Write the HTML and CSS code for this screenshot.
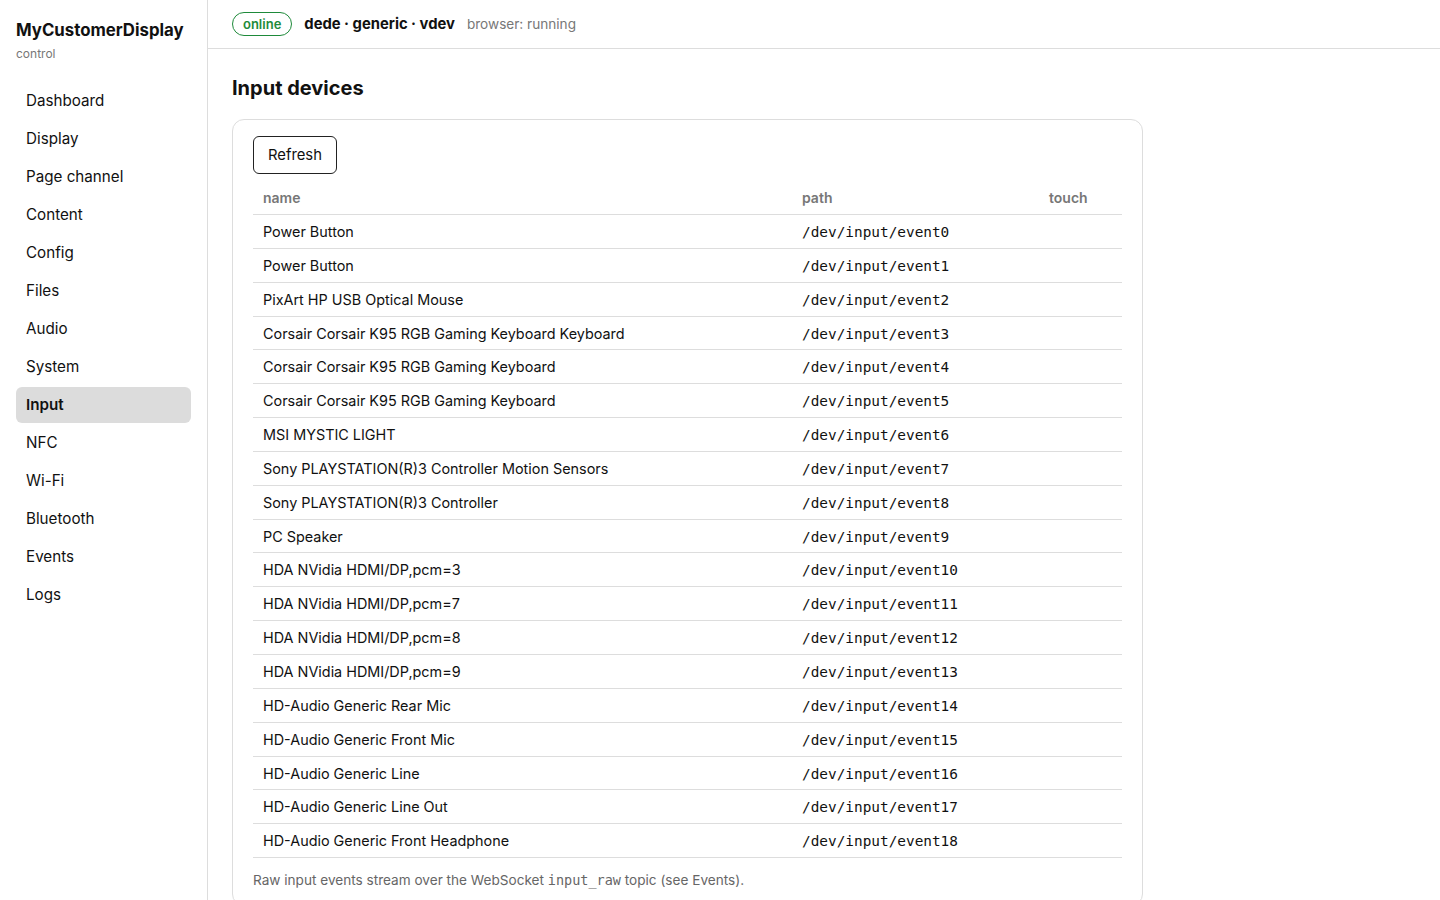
FILE: index.html
```html
<!DOCTYPE html>
<html lang="en">
<head>
    <meta charset="UTF-8">
    <meta name="viewport" content="width=device-width, initial-scale=1.0">
    <title>MyCustomerDisplay - Input</title>
    <link rel="stylesheet" href="styles.css">
</head>
<body>
    <div class="layout">
        <aside class="sidebar">
            <div class="brand">
                <div class="brand-name">MyCustomerDisplay</div>
                <div class="brand-sub">control</div>
            </div>
            <nav class="nav">
                <a href="#">Dashboard</a>
                <a href="#">Display</a>
                <a href="#">Page channel</a>
                <a href="#">Content</a>
                <a href="#">Config</a>
                <a href="#">Files</a>
                <a href="#">Audio</a>
                <a href="#">System</a>
                <a href="#" class="active">Input</a>
                <a href="#">NFC</a>
                <a href="#">Wi-Fi</a>
                <a href="#">Bluetooth</a>
                <a href="#">Events</a>
                <a href="#">Logs</a>
            </nav>
        </aside>

        <div class="main">
            <header class="topbar">
                <span class="badge">online</span>
                <span class="host">dede · generic · vdev</span>
                <span class="status">browser: running</span>
            </header>

            <section class="content">
                <h1>Input devices</h1>
                <div class="card">
                    <button class="btn">Refresh</button>
                    <table class="devices">
                        <thead>
                            <tr>
                                <th class="col-name">name</th>
                                <th class="col-path">path</th>
                                <th class="col-touch">touch</th>
                            </tr>
                        </thead>
                        <tbody>
                            <tr><td>Power Button</td><td class="mono">/dev/input/event0</td><td></td></tr>
                            <tr><td>Power Button</td><td class="mono">/dev/input/event1</td><td></td></tr>
                            <tr><td>PixArt HP USB Optical Mouse</td><td class="mono">/dev/input/event2</td><td></td></tr>
                            <tr><td>Corsair Corsair K95 RGB Gaming Keyboard Keyboard</td><td class="mono">/dev/input/event3</td><td></td></tr>
                            <tr><td>Corsair Corsair K95 RGB Gaming Keyboard</td><td class="mono">/dev/input/event4</td><td></td></tr>
                            <tr><td>Corsair Corsair K95 RGB Gaming Keyboard</td><td class="mono">/dev/input/event5</td><td></td></tr>
                            <tr><td>MSI MYSTIC LIGHT</td><td class="mono">/dev/input/event6</td><td></td></tr>
                            <tr><td>Sony PLAYSTATION(R)3 Controller Motion Sensors</td><td class="mono">/dev/input/event7</td><td></td></tr>
                            <tr><td>Sony PLAYSTATION(R)3 Controller</td><td class="mono">/dev/input/event8</td><td></td></tr>
                            <tr><td>PC Speaker</td><td class="mono">/dev/input/event9</td><td></td></tr>
                            <tr><td>HDA NVidia HDMI/DP,pcm=3</td><td class="mono">/dev/input/event10</td><td></td></tr>
                            <tr><td>HDA NVidia HDMI/DP,pcm=7</td><td class="mono">/dev/input/event11</td><td></td></tr>
                            <tr><td>HDA NVidia HDMI/DP,pcm=8</td><td class="mono">/dev/input/event12</td><td></td></tr>
                            <tr><td>HDA NVidia HDMI/DP,pcm=9</td><td class="mono">/dev/input/event13</td><td></td></tr>
                            <tr><td>HD-Audio Generic Rear Mic</td><td class="mono">/dev/input/event14</td><td></td></tr>
                            <tr><td>HD-Audio Generic Front Mic</td><td class="mono">/dev/input/event15</td><td></td></tr>
                            <tr><td>HD-Audio Generic Line</td><td class="mono">/dev/input/event16</td><td></td></tr>
                            <tr><td>HD-Audio Generic Line Out</td><td class="mono">/dev/input/event17</td><td></td></tr>
                            <tr><td>HD-Audio Generic Front Headphone</td><td class="mono">/dev/input/event18</td><td></td></tr>
                        </tbody>
                    </table>
                    <p class="note">Raw input events stream over the WebSocket <code>input_raw</code> topic (see Events).</p>
                </div>
            </section>
        </div>
    </div>
</body>
</html>
```

FILE: styles.css
```css
body {
    margin: 0;
    font-family: Inter, "Noto Sans", Arial, sans-serif;
    color: #111;
    background-color: #fff;
}

.layout {
    display: flex;
    min-height: 100vh;
}

.sidebar {
    width: 175px;
    flex-shrink: 0;
    padding: 20px 16px;
    border-right: 1px solid #ddd;
}

.brand-name {
    font-size: 16.8px;
    font-weight: 700;
    line-height: 20px;
}

.brand-sub {
    margin-top: 7px;
    font-size: 12px;
    line-height: 14px;
    color: #777;
}

.nav {
    display: flex;
    flex-direction: column;
    gap: 2px;
    margin-top: 22px;
}

.nav a {
    display: block;
    height: 36px;
    line-height: 36px;
    padding: 0 10px;
    border-radius: 6px;
    font-size: 15.2px;
    color: #111;
    text-decoration: none;
}

.nav a.active {
    background-color: #dcdcdc;
    font-weight: 600;
}

.main {
    flex: 1;
    min-width: 0;
}

.topbar {
    display: flex;
    align-items: center;
    height: 48px;
    padding: 0 24px;
    border-bottom: 1px solid #ddd;
}

.badge {
    height: 22px;
    line-height: 22px;
    padding: 0 10px;
    border: 1px solid #1e8a3a;
    border-radius: 12px;
    color: #1e8a3a;
    font-size: 13px;
    font-weight: 600;
}

.host {
    margin-left: 12px;
    font-size: 14.8px;
    font-weight: 700;
}

.status {
    margin-left: 12px;
    font-size: 13.6px;
    color: #777;
}

.content {
    padding: 27px 24px 24px;
}

h1 {
    margin: 0 0 19px;
    font-size: 20px;
    line-height: 24px;
    font-weight: 700;
}

.card {
    max-width: 869px;
    padding: 16px 20px;
    border: 1px solid #ddd;
    border-radius: 12px;
}

.btn {
    display: block;
    padding: 0 14px;
    height: 38px;
    font-family: inherit;
    font-size: 14.8px;
    color: #111;
    background-color: #fff;
    border: 1px solid #222;
    border-radius: 6px;
    cursor: pointer;
}

.devices {
    width: 100%;
    margin-top: 10px;
    border-collapse: collapse;
    font-size: 14.4px;
}

.devices th {
    text-align: left;
    padding: 5px 10px 7px;
    line-height: 18px;
    font-size: 14px;
    font-weight: 600;
    color: #777;
    border-bottom: 1px solid #ddd;
}

.devices td {
    padding: 8px 10px 6px;
    line-height: 18.84px;
    border-bottom: 1px solid #ddd;
}

.col-name {
    width: 519px;
}

.col-path {
    width: 227px;
}

.mono {
    font-family: "DejaVu Sans Mono", monospace;
    font-size: 14.4px;
}

.note {
    margin: 13px 0 0;
    font-size: 13.6px;
    line-height: 18px;
    color: #666;
}

.note code {
    font-family: "DejaVu Sans Mono", monospace;
    font-size: 13.5px;
}
```
